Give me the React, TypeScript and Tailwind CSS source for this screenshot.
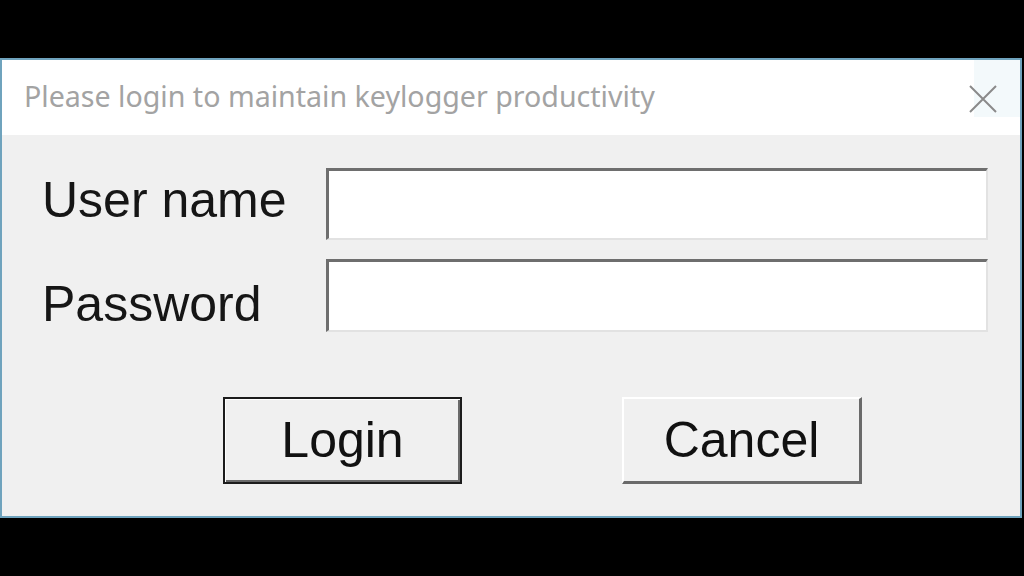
import React from "react";

export default function App() {
  return (
    <div className="w-[1024px] h-[576px] bg-black pt-[58px] overflow-hidden">
      <div className="w-[1022px] h-[460px] border-2 border-[#6fa3bd] flex flex-col">
        <div className="h-[75px] bg-white flex items-center justify-between pl-[22px] relative">
          <span
            className="text-[28.6px] text-[#a3a3a3] leading-none pb-[2px]"
            style={{ fontFamily: '"Noto Sans", "Open Sans", sans-serif' }}
          >
            Please login to maintain keylogger productivity
          </span>
          <div className="w-[46px] h-[57px] self-start bg-[#f3f9fb] flex items-start justify-start">
            <svg width="30" height="30" viewBox="0 0 30 30" className="-ml-[6px] mt-[24px]">
              <path d="M2 2 L28 28 M28 2 L2 28" stroke="#8a8a8a" strokeWidth="2" fill="none" />
            </svg>
          </div>
        </div>
        <div
          className="flex-1 bg-[#f0f0f0] flex flex-col pt-[33px] text-[#161616]"
          style={{ fontFamily: '"Liberation Sans", Arial, sans-serif' }}
        >
          <div className="flex items-center h-[72px]">
            <span className="w-[324px] pl-[40px] text-[50px] leading-none pb-[9px]">User name</span>
            <div className="w-[662px] h-[72px] bg-white border-t-[3px] border-l-[3px] border-t-[#6e6e6e] border-l-[#6e6e6e] border-b-2 border-r-2 border-b-[#e2e2e2] border-r-[#e2e2e2]" />
          </div>
          <div className="flex items-center h-[73px] mt-[19px]">
            <span className="w-[324px] pl-[40px] text-[50px] leading-none pt-[17px]">Password</span>
            <div className="w-[662px] h-[73px] bg-white border-t-[3px] border-l-[3px] border-t-[#6e6e6e] border-l-[#6e6e6e] border-b-2 border-r-2 border-b-[#e2e2e2] border-r-[#e2e2e2]" />
          </div>
          <div className="flex mt-[65px] pl-[221px] gap-[160px]">
            <button className="w-[239px] h-[87px] bg-[#f0f0f0] border-2 border-[#1c1c1c] shadow-[inset_1px_1px_0_#ffffff,inset_-2px_-2px_0_#6a6a6a] text-[50px] leading-none text-[#111111] flex items-center justify-center pb-[1px]">
              Login
            </button>
            <button className="w-[240px] h-[87px] bg-[#f0f0f0] border-t-2 border-l-2 border-t-white border-l-white border-b-[3px] border-r-[3px] border-b-[#6a6a6a] border-r-[#6a6a6a] text-[50px] leading-none text-[#111111] flex items-center justify-center pb-[1px]">
              Cancel
            </button>
          </div>
        </div>
      </div>
    </div>
  );
}
